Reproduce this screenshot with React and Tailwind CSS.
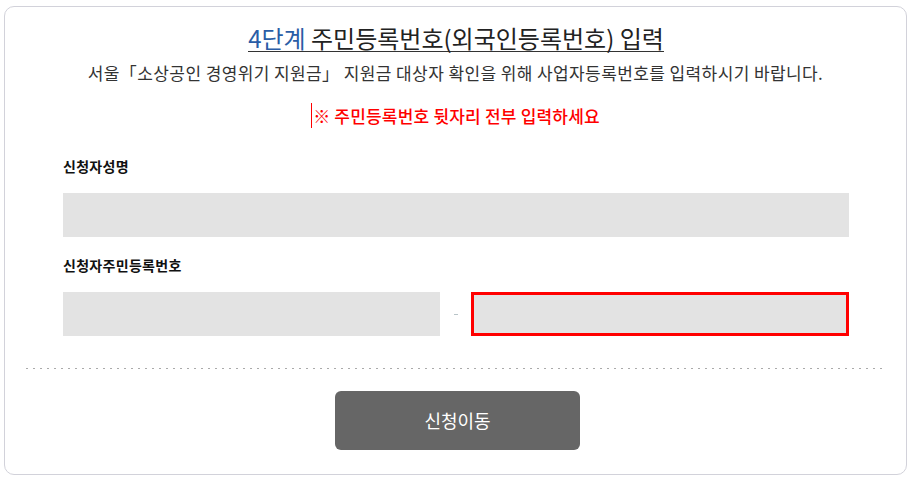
export default function App() {
  const font = { fontFamily: '"Noto Sans CJK KR", "Noto Sans", sans-serif' };

  return (
    <div className="w-[913px] h-[484px] bg-white pt-[6px] pl-[4px]" style={font}>
      <div className="w-[903px] h-[469px] border border-[#d2d2da] rounded-[10px] bg-white flex flex-col">
        {/* heading */}
        <div className="mt-[17px] flex justify-center pl-[1px]">
          <h2 className="inline-block text-[24px] leading-[27px] text-[#222] border-b border-[#333]">
            <span className="text-[#2a5da6]">4단계</span> 주민등록번호(외국인등록번호) 입력
          </h2>
        </div>
        <p className="mt-[9px] text-center text-[17px] leading-[24px] text-[#333] tracking-[0.4px]">
          서울「소상공인 경영위기 지원금」 지원금 대상자 확인을 위해 사업자등록번호를 입력하시기 바랍니다.
        </p>
        <div className="mt-[18px] flex justify-center">
          <span className="border-l border-[#ff0000] pl-[1px] text-[17px] leading-[25px] font-medium text-[#ff0000] tracking-[0.2px]">
            ※ 주민등록번호 뒷자리 전부 입력하세요
          </span>
        </div>

        {/* form */}
        <div className="px-[58px] mt-[28px]">
          <label className="block text-[14px] leading-[20px] font-bold text-[#111] tracking-[0.3px]">신청자성명</label>
          <div className="mt-[17px] h-[44px] w-[786px] bg-[#e3e3e3]" />

          <label className="block mt-[18px] text-[14px] leading-[20px] font-bold text-[#111] tracking-[0.3px]">
            신청자주민등록번호
          </label>
          <div className="mt-[17px] flex items-center w-[786px]">
            <div className="h-[44px] w-[377px] bg-[#e3e3e3]" />
            <div className="w-[31px] flex justify-center">
              <span className="block w-[4px] h-px bg-[#b8c4c8]" />
            </div>
            <div className="h-[44px] w-[378px] bg-[#e3e3e3] border-[3px] border-[#ff0000]" />
          </div>
        </div>

        <div className="mx-[21px] mt-[32px] h-px bg-[linear-gradient(to_right,#aaaaaa_2px,transparent_2px)] bg-[length:7px_1px]" />

        <div className="mt-[22px] flex justify-center pl-[4px]">
          <button className="w-[245px] h-[59px] rounded-[6px] bg-[#666666] text-white text-[18px]">
            신청이동
          </button>
        </div>
      </div>
    </div>
  );
}
